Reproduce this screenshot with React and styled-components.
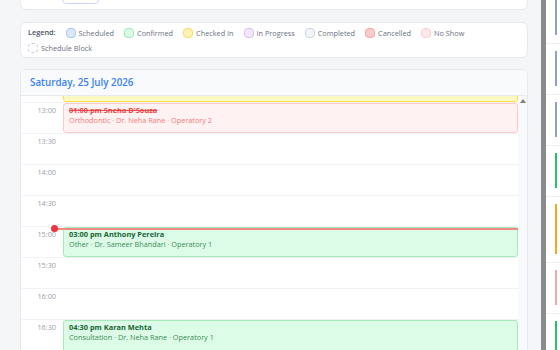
import React, { useLayoutEffect, useRef } from "react";
import styled, { createGlobalStyle } from "styled-components";

const GlobalStyle = createGlobalStyle`
  html, body {
    margin: 0;
    padding: 0;
  }
  body {
    background: #f5f6f8;
    font-family: "Open Sans", "Noto Sans", sans-serif;
    overflow: hidden;
  }
`;

// 30 minutes of the day grid = 31px (30 + the row line)
const SLOT = 31;
const DAY_START = 9 * 60;
const DAY_END = 21 * 60;

const toMin = (t) => {
  const [h, m] = t.split(":").map(Number);
  return h * 60 + m;
};
const yOf = (t) => ((toMin(t) - DAY_START) / 30) * SLOT;

const legend = [
  { label: "Scheduled", bg: "#dbe8fd", border: "#a9c7f5" },
  { label: "Confirmed", bg: "#dcfce7", border: "#9fe6b7" },
  { label: "Checked In", bg: "#fef3b5", border: "#fcd96a" },
  { label: "In Progress", bg: "#f3e8ff", border: "#d9bdfa" },
  { label: "Completed", bg: "#f1f5f9", border: "#cdd5e0" },
  { label: "Cancelled", bg: "#fecaca", border: "#f5a3a3" },
  { label: "No Show", bg: "#ffe8ea", border: "#fdcdd2" },
  { label: "Schedule Block", bg: "#ffffff", border: "#c9d0da", dashed: true },
];

const statusColors = {
  confirmed: { bg: "#dcfce7", border: "#a5eabc", title: "#166534", sub: "#3d8c58" },
  cancelled: { bg: "#fef2f2", border: "#fccaca", title: "#ef4444", sub: "#f47a7a" },
  checkedIn: { bg: "#fef9c3", border: "#fde047", title: "#854d0e", sub: "#a16207" },
};

const appointments = [
  {
    id: 1,
    start: "12:00",
    end: "13:00",
    status: "checkedIn",
    title: "12:00 pm Rohan Kulkarni",
    meta: "Cleaning · Dr. Sameer Bhandari · Operatory 1",
  },
  {
    id: 2,
    start: "13:00",
    end: "13:30",
    status: "cancelled",
    title: "01:00 pm Sneha D'Souza",
    meta: "Orthodontic · Dr. Neha Rane · Operatory 2",
  },
  {
    id: 3,
    start: "15:00",
    end: "15:30",
    status: "confirmed",
    title: "03:00 pm Anthony Pereira",
    meta: "Other · Dr. Sameer Bhandari · Operatory 1",
  },
  {
    id: 4,
    start: "16:30",
    end: "17:30",
    status: "confirmed",
    title: "04:30 pm Karan Mehta",
    meta: "Consultation · Dr. Neha Rane · Operatory 1",
  },
];

const slots = [];
for (let m = DAY_START; m < DAY_END; m += 30) {
  slots.push(`${String(Math.floor(m / 60)).padStart(2, "0")}:${String(m % 60).padStart(2, "0")}`);
}

// colour strips of the day list on the right (only their edge is in view)
const sideItems = [
  { color: "#8fa1c7" },
  { color: "#8fa1c7" },
  { color: "#8fa1c7" },
  { color: "#22c55e" },
  { color: "#f5a623", tall: true },
  { color: "#f8a5a5" },
  { color: "#22c55e" },
];

export default function App() {
  const mainRef = useRef(null);
  const gridRef = useRef(null);
  const sideRef = useRef(null);

  useLayoutEffect(() => {
    if (mainRef.current) mainRef.current.scrollTop = 30;
    // keep the 13:00 row just under the header
    if (gridRef.current) gridRef.current.scrollTop = yOf("13:00") - 6;
    if (sideRef.current) sideRef.current.scrollTop = 7;
  }, []);

  return (
    <>
      <GlobalStyle />
      <Shell>
        <Main ref={mainRef}>
          <Stack>
            <TopCard>
              <TodayButton>Today</TodayButton>
            </TopCard>

            <LegendCard>
              <LegendTitle>Legend:</LegendTitle>
              {legend.map((l) => (
                <LegendItem key={l.label}>
                  <Swatch $bg={l.bg} $border={l.border} $dashed={l.dashed} />
                  {l.label}
                </LegendItem>
              ))}
            </LegendCard>

            <CalendarCard>
              <CalHeader>Saturday, 25 July 2026</CalHeader>
              <CalView>
                <ScrollBody ref={gridRef}>
                  <Grid>
                    {slots.map((s) => (
                      <SlotRow key={s}>
                        <TimeLabel>{s}</TimeLabel>
                        <SlotCell />
                      </SlotRow>
                    ))}
                    <EventLayer>
                      {appointments.map((a) => {
                        const c = statusColors[a.status];
                        const top = yOf(a.start) + 1;
                        const height = yOf(a.end) - yOf(a.start) - 1;
                        return (
                          <Event key={a.id} $c={c} style={{ top, height }}>
                            <EventTitle $c={c} $strike={a.status === "cancelled"}>
                              {a.title}
                            </EventTitle>
                            <EventMeta $c={c}>{a.meta}</EventMeta>
                          </Event>
                        );
                      })}
                      <NowLine style={{ top: yOf("15:02") }}>
                        <NowDot />
                      </NowLine>
                    </EventLayer>
                  </Grid>
                </ScrollBody>
                <Track>
                  <UpArrow />
                </Track>
              </CalView>
            </CalendarCard>
          </Stack>
        </Main>

        <PageThumb />

        <SidePanel ref={sideRef}>
          {sideItems.map((it, i) => (
            <SideItem key={i}>
              <SideCard $color={it.color} $tall={it.tall} />
            </SideItem>
          ))}
        </SidePanel>
      </Shell>
    </>
  );
}

const Shell = styled.div`
  display: flex;
  width: 560px;
  height: 350px;
  overflow: hidden;
`;

const Main = styled.div`
  width: 541px;
  flex: none;
  box-sizing: border-box;
  padding: 0 13px 0 20px;
  height: 350px;
  overflow: hidden;
`;

const Stack = styled.div`
  display: flex;
  flex-direction: column;
`;

const Card = styled.div`
  background: #fff;
  border: 1px solid #e6e9ef;
  border-radius: 6px;
  box-sizing: border-box;
`;

const TopCard = styled(Card)`
  height: 40px;
  display: flex;
  align-items: flex-end;
  padding: 0 8px 5px 41px;
`;

const TodayButton = styled.button`
  width: 37px;
  height: 24px;
  box-sizing: border-box;
  background: #fff;
  border: 1px solid #c5dafb;
  border-radius: 4px;
  font-family: inherit;
  font-size: 7.3px;
  line-height: 10px;
  color: #3b82f6;
  padding: 0 0 12px;
`;

const LegendCard = styled(Card)`
  margin-top: 12px;
  display: flex;
  flex-wrap: wrap;
  align-items: center;
  column-gap: 10px;
  row-gap: 4px;
  padding: 4px 7px;
  font-size: 7.3px;
  color: #6b7280;
`;

const LegendTitle = styled.span`
  font-weight: 600;
  color: #4b5563;
  line-height: 11px;
`;

const LegendItem = styled.span`
  display: inline-flex;
  align-items: center;
  gap: 3px;
  height: 11px;
  white-space: nowrap;
`;

const Swatch = styled.span`
  width: 10px;
  height: 10px;
  box-sizing: border-box;
  border-radius: 4px;
  background: ${(p) => p.$bg};
  border: 1px ${(p) => (p.$dashed ? "dashed" : "solid")} ${(p) => p.$border};
`;

const CalendarCard = styled(Card)`
  margin-top: 11px;
  height: 420px;
  flex: none;
  display: flex;
  flex-direction: column;
  overflow: hidden;
`;

const CalHeader = styled.div`
  height: 26px;
  flex: none;
  box-sizing: border-box;
  display: flex;
  align-items: center;
  padding: 0 9px;
  background: #f8fafc;
  border-bottom: 1px solid #e6e9ef;
  color: #3b82f6;
  font-size: 9.8px;
  font-weight: 600;
`;

const CalView = styled.div`
  flex: 1;
  min-height: 0;
  display: flex;
`;

const ScrollBody = styled.div`
  flex: 1;
  overflow: hidden;
`;

const Grid = styled.div`
  position: relative;
`;

const SlotRow = styled.div`
  display: flex;
  height: ${SLOT}px;
  box-sizing: border-box;
  border-top: 1px solid #f0f2f5;
`;

const TimeLabel = styled.div`
  width: 41px;
  flex: none;
  box-sizing: border-box;
  padding: 2px 6px 0 0;
  text-align: right;
  font-size: 7.3px;
  line-height: 10px;
  color: #9aa1ad;
`;

const SlotCell = styled.div`
  flex: 1;
`;

const EventLayer = styled.div`
  position: absolute;
  top: 0;
  bottom: 0;
  left: 41px;
  right: 0;
`;

const Event = styled.div`
  position: absolute;
  left: 1px;
  right: 0;
  box-sizing: border-box;
  padding: 1px 5px;
  background: ${(p) => p.$c.bg};
  border: 1px solid ${(p) => p.$c.border};
  border-radius: 3px;
  overflow: hidden;
`;

const EventTitle = styled.div`
  font-size: 7.4px;
  line-height: 10px;
  font-weight: 700;
  color: ${(p) => p.$c.title};
  text-decoration: ${(p) => (p.$strike ? "line-through" : "none")};
  white-space: nowrap;
`;

const EventMeta = styled.div`
  font-size: 7.3px;
  line-height: 10px;
  color: ${(p) => p.$c.sub};
  white-space: nowrap;
`;

const NowLine = styled.div`
  position: absolute;
  left: -7px;
  right: 0;
  height: 1.5px;
  background: #f08a80;
  z-index: 2;
`;

const NowDot = styled.span`
  position: absolute;
  left: -4px;
  top: -2.75px;
  width: 7px;
  height: 7px;
  border-radius: 50%;
  background: #ef3340;
`;

const Track = styled.div`
  width: 9px;
  flex: none;
  background: #f8f9fb;
  display: flex;
  justify-content: center;
  padding-top: 3px;
`;

const UpArrow = styled.span`
  width: 0;
  height: 0;
  border-left: 3px solid transparent;
  border-right: 3px solid transparent;
  border-bottom: 4px solid #7c8089;
`;

const PageThumb = styled.div`
  width: 5px;
  flex: none;
  background: #8b8b8b;
`;

const SidePanel = styled.div`
  flex: 1;
  background: #fff;
  overflow: hidden;
`;

const SideItem = styled.div`
  padding: 7px 0 8px 9px;
  border-bottom: 1px solid #eceef2;
`;

const SideCard = styled.div`
  height: ${(p) => (p.$tall ? 50 : 35)}px;
  border-left: 2px solid ${(p) => p.$color};
`;
